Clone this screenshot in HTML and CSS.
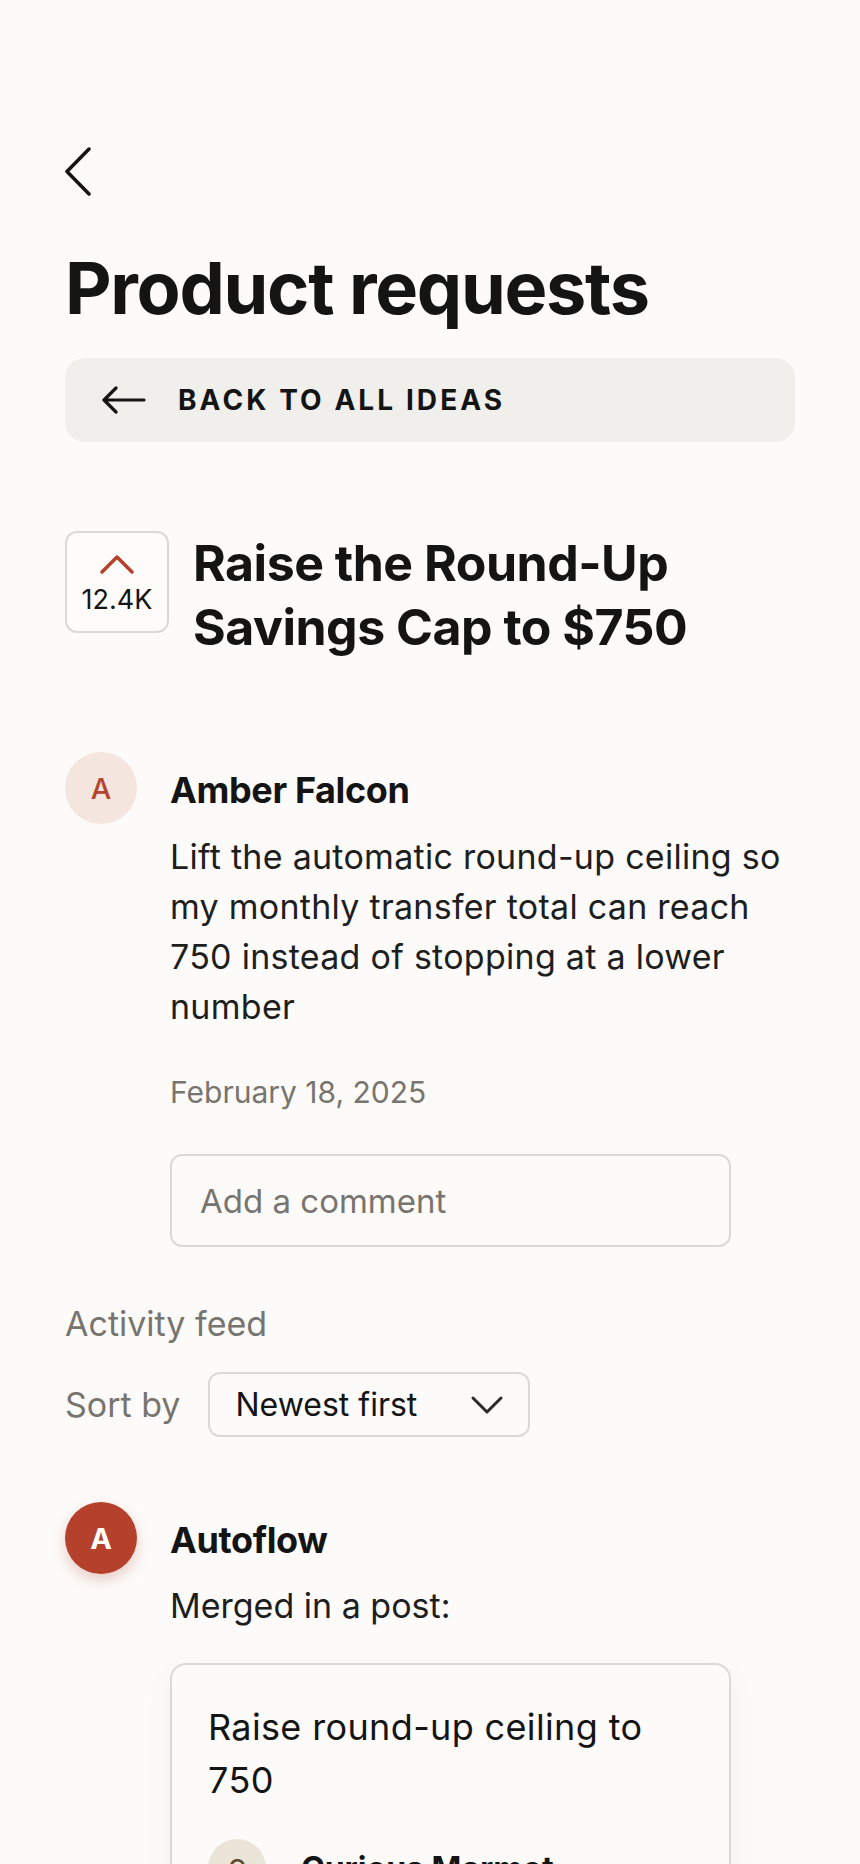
FILE: index.html
```html
<!DOCTYPE html>
<html lang="en">
<head>
  <meta charset="UTF-8">
  <meta name="viewport" content="width=device-width,initial-scale=1.0">
  <title>Product requests</title>
  <link rel="stylesheet" href="styles.css">
</head>
<body>
  <div class="page">
    <!-- top navigation -->
    <a class="nav-back" href="#" aria-label="Back">
      <svg width="28" height="50" viewBox="0 0 28 50" fill="none" stroke="#141414" stroke-width="3.5" stroke-linecap="round" stroke-linejoin="round">
        <path d="M25 2 L3 24.5 L25 47"/>
      </svg>
    </a>

    <h1 class="page-title">Product requests</h1>

    <a class="all-ideas" href="#">
      <svg width="44" height="28" viewBox="0 0 44 28" fill="none" stroke="#141414" stroke-width="3.2" stroke-linecap="round" stroke-linejoin="round">
        <path d="M42 14 H3 M14 2 L2 14 L14 26"/>
      </svg>
      <span>Back to all ideas</span>
    </a>

    <!-- idea header -->
    <div class="idea-head">
      <button class="vote">
        <svg width="36" height="22" viewBox="0 0 36 22" fill="none" stroke="#b5402c" stroke-width="3.5" stroke-linecap="round" stroke-linejoin="round">
          <path d="M3 19 L18 4 L33 19"/>
        </svg>
        <span class="vote-count">12.4K</span>
      </button>
      <h2 class="idea-title">Raise the Round-Up Savings Cap to $750</h2>
    </div>

    <!-- original post -->
    <div class="post">
      <div class="avatar avatar-soft">A</div>
      <div class="post-body">
        <div class="author">Amber Falcon</div>
        <p class="post-text">Lift the automatic round-up ceiling so my monthly transfer total can reach 750 instead of stopping at a lower number</p>
        <div class="post-date">February 18, 2025</div>
        <div class="comment-input">Add a comment</div>
      </div>
    </div>

    <!-- activity -->
    <div class="feed-label">Activity feed</div>
    <div class="sort-row">
      <span class="sort-label">Sort by</span>
      <div class="select">
        <span>Newest first</span>
        <svg width="34" height="20" viewBox="0 0 34 20" fill="none" stroke="#2a2a2a" stroke-width="3" stroke-linecap="round" stroke-linejoin="round">
          <path d="M3 3 L17 17 L31 3"/>
        </svg>
      </div>
    </div>

    <div class="post activity">
      <div class="avatar avatar-brand">A</div>
      <div class="post-body">
        <div class="author">Autoflow</div>
        <p class="activity-text">Merged in a post:</p>
        <div class="merged-card">
          <div class="merged-title">Raise round-up ceiling to 750</div>
          <div class="merged-author">
            <div class="avatar avatar-small">C</div>
            <span>Curious Marmot</span>
          </div>
          <p class="merged-text">Let the round-up ceiling go to 750 so more spare change lands in savings each month</p>
        </div>
      </div>
    </div>
  </div>
</body>
</html>
```

FILE: styles.css
```css
body {
  margin: 0;
  padding: 0;
  background: #fcfbf9;
  color: #141414;
  font-family: 'Inter', 'Noto Sans', sans-serif;
}
.page {
  padding: 147px 65px 0 65px;
  height: 1864px;
  box-sizing: border-box;
  overflow: hidden;
}

.nav-back {
  display: block;
  width: 28px;
  height: 50px;
  margin-left: -1px;
}
.nav-back svg {
  display: block;
}

.page-title {
  margin: 51px 0 0 0;
  font-size: 72px;
  line-height: 80px;
  font-weight: 700;
  letter-spacing: -0.018em;
}

.all-ideas {
  margin-top: 30px;
  height: 84px;
  display: flex;
  align-items: center;
  gap: 32px;
  padding: 0 37px;
  background: #f0efeb;
  border-radius: 20px;
  text-decoration: none;
  color: #141414;
}
.all-ideas svg {
  display: block;
}
.all-ideas span {
  font-size: 28px;
  font-weight: 700;
  text-transform: uppercase;
  letter-spacing: 0.11em;
}

.idea-head {
  margin-top: 89px;
  display: flex;
  align-items: flex-start;
  gap: 24px;
}
.vote {
  flex: none;
  width: 104px;
  height: 102px;
  box-sizing: border-box;
  border: 2px solid #dcd9d4;
  border-radius: 12px;
  background: #fdfcfb;
  padding: 20px 0 0 0;
  display: flex;
  flex-direction: column;
  align-items: center;
  gap: 9px;
  font-family: inherit;
}
.vote svg {
  display: block;
}
.vote-count {
  font-size: 27px;
  line-height: 32px;
  color: #141414;
}
.idea-title {
  margin: 0;
  font-size: 50px;
  line-height: 64px;
  font-weight: 700;
  letter-spacing: -0.01em;
}

.post {
  margin-top: 93px;
  display: flex;
  align-items: flex-start;
  gap: 33px;
}
.avatar {
  flex: none;
  width: 72px;
  height: 72px;
  border-radius: 50%;
  display: flex;
  align-items: center;
  justify-content: center;
  font-size: 29px;
}
.avatar-soft {
  background: #f4e6de;
  color: #b5452f;
  font-weight: 500;
}
.avatar-brand {
  background: #b5412d;
  color: #fff;
  font-weight: 700;
  box-shadow: 0 6px 14px rgba(181, 65, 45, 0.25);
}
.post-body {
  flex: 1;
  padding-top: 16px;
}
.author {
  font-size: 36px;
  line-height: 44px;
  font-weight: 700;
  letter-spacing: -0.01em;
}
.post-text {
  margin: 20px 0 0 0;
  font-size: 34px;
  line-height: 50px;
  letter-spacing: 0.008em;
  color: #1e1e1e;
}
.post-date {
  margin-top: 40px;
  font-size: 30px;
  line-height: 40px;
  color: #78746f;
}
.comment-input {
  margin-top: 42px;
  width: 561px;
  height: 93px;
  box-sizing: border-box;
  border: 2px solid #dcd9d4;
  border-radius: 12px;
  padding: 0 28px;
  display: flex;
  align-items: center;
  font-size: 33px;
  line-height: 40px;
  color: #78746f;
}

.feed-label {
  margin-top: 55px;
  font-size: 34px;
  line-height: 44px;
  color: #78746f;
}
.sort-row {
  margin-top: 26px;
  display: flex;
  align-items: center;
  gap: 28px;
}
.sort-label {
  font-size: 34px;
  color: #78746f;
}
.select {
  width: 322px;
  height: 65px;
  box-sizing: border-box;
  border: 2px solid #dcd9d4;
  border-radius: 12px;
  padding: 0 24px 0 25px;
  display: flex;
  align-items: center;
  justify-content: space-between;
  font-size: 32px;
  color: #141414;
}
.select svg {
  display: block;
}

.activity {
  margin-top: 65px;
}
.activity-text {
  margin: 20px 0 0 0;
  font-size: 34px;
  line-height: 48px;
  color: #1e1e1e;
}
.merged-card {
  margin-top: 33px;
  width: 561px;
  box-sizing: border-box;
  border: 2px solid #dcd9d4;
  border-radius: 16px;
  padding: 36px;
  background: #fcfbf9;
  box-shadow: 0 10px 28px rgba(0, 0, 0, 0.05);
}
.merged-title {
  font-size: 36px;
  line-height: 53px;
  letter-spacing: 0.01em;
}
.merged-author {
  margin-top: 32px;
  display: flex;
  align-items: center;
  gap: 35px;
  font-size: 32px;
  font-weight: 700;
}
.avatar-small {
  width: 58px;
  height: 58px;
  background: #ebe5d9;
  color: #5c4b2e;
  font-size: 24px;
  font-weight: 500;
}
.merged-text {
  margin: 20px 0 0 0;
  font-size: 30px;
  line-height: 46px;
}
```
